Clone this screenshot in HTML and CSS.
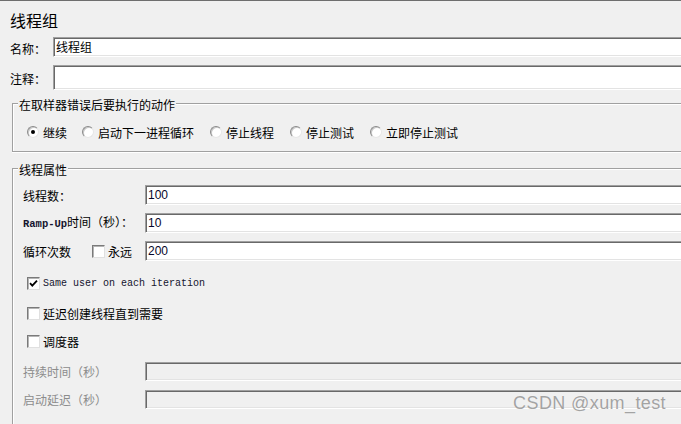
FILE: index.html
```html
<!DOCTYPE html>
<html lang="zh-CN">
<head>
<meta charset="utf-8">
<title>线程组</title>
<link rel="stylesheet" href="styles.css">
</head>
<body>
<div class="page">
  <div class="title">线程组</div>
  <div class="field-row">
    <span class="lbl-top">名称：</span>
    <div class="input">线程组</div>
  </div>
  <div class="field-row gap8">
    <span class="lbl-top">注释：</span>
    <div class="input tall"></div>
  </div>

  <div class="group g1">
    <div class="group-title">在取样器错误后要执行的动作</div>
    <div class="radio-row">
      <span class="opt"><span class="radio checked"></span>继续</span>
      <span class="opt"><span class="radio"></span>启动下一进程循环</span>
      <span class="opt"><span class="radio"></span>停止线程</span>
      <span class="opt"><span class="radio"></span>停止测试</span>
      <span class="opt"><span class="radio"></span>立即停止测试</span>
    </div>
  </div>

  <div class="group g2">
    <div class="group-title">线程属性</div>
    <div class="prop-row first">
      <span class="lbl">线程数：</span>
      <div class="input num">100</div>
    </div>
    <div class="prop-row">
      <span class="lbl"><span class="mono bold">Ramp-Up</span>时间（秒）：</span>
      <div class="input num">10</div>
    </div>
    <div class="prop-row">
      <span class="lbl-loop">循环次数</span>
      <span class="check"></span>
      <span class="lbl-forever">永远</span>
      <div class="input num">200</div>
    </div>
    <div class="check-row c1">
      <span class="check"><svg viewBox="0 0 11 11" width="11" height="11"><path d="M2 5.2 L4.3 7.6 L9 2.6" fill="none" stroke="#000" stroke-width="1.8"/></svg></span>
      <span class="mono">Same user on each iteration</span>
    </div>
    <div class="check-row c2">
      <span class="check"></span>
      <span>延迟创建线程直到需要</span>
    </div>
    <div class="check-row c3">
      <span class="check"></span>
      <span>调度器</span>
    </div>
    <div class="prop-row disabled d1">
      <span class="lbl">持续时间（秒）</span>
      <div class="input off"></div>
    </div>
    <div class="prop-row disabled d2">
      <span class="lbl">启动延迟（秒）</span>
      <div class="input off"></div>
    </div>
  </div>
</div>
<div class="watermark">CSDN @xum_test</div>
</body>
</html>
```
FILE: styles.css
```css
html, body {
  margin: 0;
  padding: 0;
  background: #f0f0f0;
  overflow: hidden;
}
body {
  width: 681px;
  height: 424px;
  font-family: "Noto Sans CJK SC", "Noto Sans", sans-serif;
  font-size: 12px;
  color: #000;
  position: relative;
}
.page {
  height: 424px;
  box-sizing: border-box;
  border-top: 1px solid #6e6e6e;
  padding-left: 10px;
}
.title {
  font-size: 16px;
  line-height: 20px;
  margin-top: 9px;
  margin-bottom: 7px;
}
.field-row {
  display: flex;
  align-items: center;
}
.gap8 { margin-top: 8px; }
.lbl-top {
  width: 43px;
  line-height: 17px;
  padding-top: 2px;
}
.input {
  flex: 1;
  min-width: 0;
  height: 20px;
  box-sizing: border-box;
  background: #fff;
  border-top: 1px solid #a0a0a0;
  border-left: 1px solid #a0a0a0;
  border-bottom: 1px solid #fff;
  box-shadow: inset 1px 1px 0 #696969, inset 0 -1px 0 #e3e3e3;
  padding-left: 2px;
  line-height: 17px;
  white-space: nowrap;
}
.input.tall { height: 25px; }
.input.num {
  font-family: "Liberation Sans", Arial, sans-serif;
  color: #06062a;
  line-height: 18px;
}
.input.off {
  background: #f0f0f0;
  height: 19px;
}

.group {
  margin-left: 2px;
  border-top: 1px solid #a0a0a0;
  border-left: 1px solid #a0a0a0;
  box-shadow: inset 1px 1px 0 #fff;
}
.g1 {
  margin-top: 13px;
  border-bottom: 1px solid #a0a0a0;
  box-shadow: inset 1px 1px 0 #fff, 0 1px 0 #fff;
}
.g2 {
  margin-top: 16px;
  height: 256px;
  box-sizing: border-box;
}
.group-title {
  width: fit-content;
  margin-top: -8px;
  margin-left: 5px;
  padding: 0 1px;
  background: #f0f0f0;
  line-height: 17px;
}
.radio-row {
  display: flex;
  align-items: center;
  gap: 16px;
  height: 20px;
  margin-top: 9px;
  margin-bottom: 9px;
  padding-left: 14px;
}
.opt {
  display: flex;
  align-items: center;
  gap: 4px;
  line-height: 17px;
}
.opt:first-child { margin-right: -1px; }
.radio {
  width: 12px;
  height: 12px;
  box-sizing: border-box;
  border-radius: 50%;
  background: #fff;
  border: 1px solid;
  border-color: #8a8a8a #e6e6e6 #e6e6e6 #8a8a8a;
  box-shadow: inset 1px 1px 0 #c8c8c8;
  display: flex;
  align-items: center;
  justify-content: center;
}
.radio.checked::after {
  content: "";
  width: 4px;
  height: 4px;
  border-radius: 50%;
  background: #000;
}

.prop-row {
  display: flex;
  align-items: center;
  height: 20px;
  margin-top: 8px;
  padding-left: 10px;
}
.prop-row.first { margin-top: 7px; }
.prop-row.d1 { margin-top: 11px; height: 19px; }
.prop-row.d2 { margin-top: 9px; height: 19px; }
.lbl {
  width: 122px;
  line-height: 17px;
  white-space: nowrap;
}
.lbl-loop { width: 69px; line-height: 17px; }
.lbl-forever { width: 37px; margin-left: 3px; line-height: 17px; }
.disabled .lbl { color: #8c8c8c; }

.mono {
  font-family: "Liberation Mono", "DejaVu Sans Mono", monospace;
  font-size: 10px;
  color: #14142e;
}
.mono.bold {
  font-size: 10.5px;
  font-weight: bold;
}

.check {
  width: 13px;
  height: 13px;
  box-sizing: border-box;
  background: #fff;
  border: 1px solid;
  border-color: #7a7a7a #e0e0e0 #e0e0e0 #7a7a7a;
  box-shadow: inset 1px 1px 0 #b4b4b4;
  display: flex;
  align-items: center;
  justify-content: center;
}
.check svg { display: block; }
.check-row {
  display: flex;
  align-items: center;
  gap: 3px;
  height: 20px;
  padding-left: 14px;
  line-height: 17px;
}
.c1 { margin-top: 12px; }
.c2 { margin-top: 10px; }
.c3 { margin-top: 8px; }

.watermark {
  position: absolute;
  top: 393px;
  right: 15px;
  font-family: "Liberation Sans", Arial, sans-serif;
  font-size: 18px;
  letter-spacing: 0.4px;
  line-height: 20px;
  color: #a3a3a3;
  text-shadow: 0 0 1px #fff;
}
```
